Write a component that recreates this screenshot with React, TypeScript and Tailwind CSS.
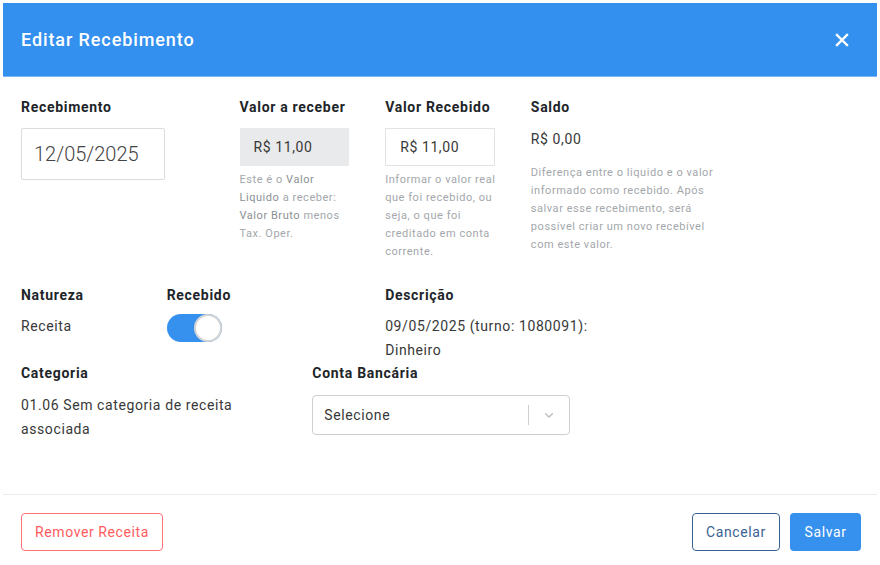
import React from "react";

const Label: React.FC<{ children: React.ReactNode; className?: string }> = ({ children, className = "" }) => (
    <div className={`text-[14px] leading-5 font-bold tracking-[0.7px] text-[#212529] ${className}`}>{children}</div>
);

const Help: React.FC<{ children: React.ReactNode; className?: string }> = ({ children, className = "" }) => (
    <p className={`text-[11px] leading-[18px] tracking-[0.55px] whitespace-nowrap text-[#a3a7ab] ${className}`}>{children}</p>
);

const App: React.FC = () => {
    const [recebido, setRecebido] = React.useState<boolean>(true);

    return (
        <div className="bg-white min-h-[565px] pt-[3px] pl-[3px] font-['Roboto',sans-serif]">
            <div className="w-[874px] bg-white">
                {/* header */}
                <div className="h-[74px] bg-[#3390ef] border-b border-[#7db7f3] flex items-center justify-between pl-[18px] pr-[28px]">
                    <h1 className="text-white text-[18px] font-medium tracking-[0.9px]">Editar Recebimento</h1>
                    <button className="text-white">
                        <svg width="14" height="14" viewBox="0 0 14 14" fill="none" stroke="currentColor" strokeWidth="2.4" strokeLinecap="square">
                            <path d="M2 2 L12 12 M12 2 L2 12" />
                        </svg>
                    </button>
                </div>

                {/* body */}
                <div className="pt-[20px] pb-[53px] text-[14px] tracking-[0.6px] text-[#383838]">
                    <div className="grid grid-cols-12">
                        <div className="col-span-3 px-[18px]">
                            <Label className="mb-[11px]">Recebimento</Label>
                            <input
                                defaultValue="12/05/2025"
                                className="w-[144px] h-[52px] border border-[#dcdcdc] rounded-[2px] px-[12px] text-[20px] tracking-normal font-light text-[#444] outline-none"
                            />
                        </div>
                        <div className="col-span-2 px-[18px]">
                            <Label className="mb-[11px]">Valor a receber</Label>
                            <div className="h-[38px] bg-[#e9eaeb] flex items-center px-[14px]">R$ 11,00</div>
                            <Help className="mt-[5px]">
                                Este é o <span className="text-[#8a8f94]">Valor</span>
                                <br />
                                <span className="text-[#8a8f94]">Liquido</span> a receber:
                                <br />
                                <span className="text-[#8a8f94]">Valor Bruto</span> menos
                                <br />
                                Tax. Oper.
                            </Help>
                        </div>
                        <div className="col-span-2 px-[18px]">
                            <Label className="mb-[11px]">Valor Recebido</Label>
                            <input
                                defaultValue="R$ 11,00"
                                className="w-full h-[38px] border border-[#e2e2e2] px-[14px] tracking-[0.6px] outline-none"
                            />
                            <Help className="mt-[5px]">
                                Informar o valor real
                                <br />
                                que foi recebido, ou
                                <br />
                                seja, o que foi
                                <br />
                                creditado em conta
                                <br />
                                corrente.
                            </Help>
                        </div>
                        <div className="col-span-3 px-[18px]">
                            <Label className="mb-[12px]">Saldo</Label>
                            <div className="leading-5">R$ 0,00</div>
                            <Help className="mt-[15px]">
                                Diferença entre o liquido e o valor
                                <br />
                                informado como recebido. Após
                                <br />
                                salvar esse recebimento, será
                                <br />
                                possível criar um novo recebível
                                <br />
                                com este valor.
                            </Help>
                        </div>
                    </div>

                    <div className="grid grid-cols-12 mt-[24px]">
                        <div className="col-span-2 px-[18px]">
                            <Label className="mb-[9px]">Natureza</Label>
                            <div className="leading-6">Receita</div>
                        </div>
                        <div className="col-span-3 px-[18px]">
                            <Label className="mb-[9px]">Recebido</Label>
                            <button
                                onClick={() => setRecebido(!recebido)}
                                className={`mt-[2px] w-[55px] h-[28px] rounded-full flex items-center ${recebido ? "bg-[#3590ee] justify-end" : "bg-[#ddd] justify-start"}`}
                            >
                                <span className="w-[28px] h-[28px] rounded-full bg-white border-2 border-[#d4d4d4]" />
                            </button>
                        </div>
                        <div className="col-span-4 px-[18px]">
                            <Label className="mb-[9px]">Descrição</Label>
                            <div className="leading-6">
                                09/05/2025 (turno: 1080091):
                                <br />
                                Dinheiro
                            </div>
                        </div>
                    </div>

                    <div className="grid grid-cols-12 mt-[1px]">
                        <div className="col-span-4 px-[18px]">
                            <Label className="mb-[10px]">Categoria</Label>
                            <div className="leading-6">
                                01.06 Sem categoria de receita
                                <br />
                                associada
                            </div>
                        </div>
                        <div className="col-span-4 px-[18px]">
                            <Label className="mb-[12px]">Conta Bancária</Label>
                            <div className="w-[258px] h-[40px] border border-[#cfcfcf] rounded-[4px] flex items-center">
                                <span className="flex-1 pl-[11px]">Selecione</span>
                                <span className="w-px h-[20px] bg-[#cfcfcf]" />
                                <span className="w-[40px] flex justify-center text-[#c4c4c4]">
                                    <svg width="14" height="14" viewBox="0 0 20 20" fill="currentColor">
                                        <path d="M4.516 7.548c0.436-0.446 1.043-0.481 1.576 0l3.908 3.747 3.908-3.747c0.533-0.481 1.141-0.446 1.574 0 0.436 0.445 0.408 1.197 0 1.615-0.406 0.418-4.695 4.502-4.695 4.502-0.217 0.223-0.502 0.335-0.787 0.335s-0.570-0.112-0.789-0.335c0 0-4.287-4.084-4.695-4.502s-0.436-1.17 0-1.615z" />
                                    </svg>
                                </span>
                            </div>
                        </div>
                    </div>
                </div>

                {/* footer */}
                <div className="border-t border-[#e9ecef] pt-[18px] pl-[18px] pr-[16px] flex justify-between text-[14px] tracking-[0.6px]">
                    <button className="h-[38px] w-[142px] border border-[#ff6f73] rounded-[4px] text-[#ff5b60]">Remover Receita</button>
                    <div className="flex gap-[10px]">
                        <button className="h-[38px] w-[88px] border border-[#3a6394] rounded-[4px] text-[#3a6394]">Cancelar</button>
                        <button className="h-[38px] w-[71px] bg-[#3590ee] rounded-[4px] text-white">Salvar</button>
                    </div>
                </div>
            </div>
        </div>
    );
};

export default App;
